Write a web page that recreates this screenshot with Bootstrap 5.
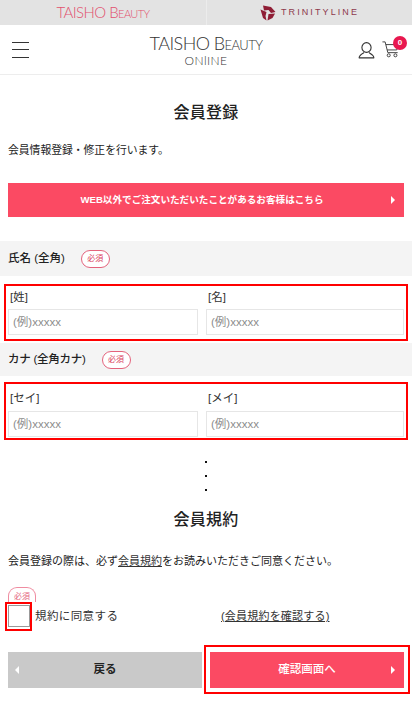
<!DOCTYPE html>
<html lang="ja">
<head>
    <meta charset="UTF-8">
    <meta name="viewport" content="width=device-width, initial-scale=1.0">
    <title>会員登録</title>
    <link href="https://cdn.jsdelivr.net/npm/bootstrap@5.3.0/dist/css/bootstrap.min.css" rel="stylesheet">
    <style>
        body { font-family: "Liberation Sans", "Noto Sans CJK JP", sans-serif; color: #222; font-size: 11px; background: #fff; }
        .brand-bar { height: 25px; background: #e3e3e3; }
        .brand-cell { flex: 1 1 50%; height: 25px; }
        .brand-cell + .brand-cell { border-left: 1px solid #ececec; }
        .brand-logo { font-family: Lato, "Liberation Sans", sans-serif; font-weight: 300; font-variant: small-caps; color: #e2506e; font-size: 15px; line-height: 25px; letter-spacing: -.56px; }
        .trinity-text { font-family: "Liberation Sans", sans-serif; color: #8e3a4c; font-size: 9px; letter-spacing: 2.1px; line-height: 25px; }
        .trinity-mark { margin-right: 5px; }
        .site-head { height: 50px; border-bottom: 1px solid #ededed; position: relative; }
        .burger { width: 17px; height: 16px; margin: 17px 0 0 12px; border-top: 1px solid #333; border-bottom: 1px solid #333; position: relative; }
        .burger::after { content: ""; position: absolute; left: 0; right: 0; top: 6px; border-top: 1px solid #333; }
        .site-logo { font-family: Lato, "Liberation Sans", sans-serif; font-weight: 300; color: #333; text-align: center; line-height: 1; }
        .site-logo-main { font-size: 18px; font-variant: small-caps; letter-spacing: -.55px; display: block; margin-top: 9px; }
        .site-logo-sub { font-size: 12px; letter-spacing: .5px; display: block; margin-top: 3px; }
        .head-icons { position: absolute; top: 17px; left: 357px; }
        .cart-icon { margin: -1px 0 0 6px; }
        .cart-count { position: absolute; left: 36px; top: -6px; width: 14px; height: 14px; border-radius: 50%; background: #e8184f; color: #fff; font-size: 8px; font-weight: 700; line-height: 14px; text-align: center; }
        .page-main { padding-top: 26px; }
        .page-title { font-size: 16px; font-weight: 500; letter-spacing: .2px; line-height: 24px; text-align: center; margin: 0; color: #222; }
        .lead-note { margin: 16px 8px 0; font-size: 10.8px; line-height: 18px; }
        .pink-btn { background: #fb4a63; color: #fff; border: 0; border-radius: 0; font-weight: 500; position: relative; }
        .pink-btn:hover { background: #fb4a63; color: #fff; }
        .notice-btn { display: block; width: 396px; height: 34px; margin: 24px 8px 0; padding: 0 8px 0 0; font-size: 9.6px; font-weight: 700; line-height: 34px; }
        .tri-right { position: absolute; right: 9px; top: 50%; margin-top: -4px; border-left: 4px solid #fff; border-top: 4px solid transparent; border-bottom: 4px solid transparent; }
        .tri-left { position: absolute; left: 7px; top: 50%; margin-top: -4px; border-right: 4px solid #fff; border-top: 4px solid transparent; border-bottom: 4px solid transparent; }
        .field-band { background: #f4f4f4; padding: 0 8px; }
        .band-one { height: 35px; margin-top: 24px; }
        .band-two { height: 33px; margin-top: 2px; }
        .field-label { font-size: 11.5px; font-weight: 500; color: #222; }
        .kana-label { letter-spacing: -.25px; }
        .must-tag { display: inline-block; width: 29px; height: 18px; margin-left: 16px; border: 1px solid #e4637c; border-radius: 9px; color: #d9405c; background: #fff; font-size: 8px; line-height: 16px; text-align: center; }
        .red-box { border: 2px solid #f00; margin: 0 4px; padding-left: 2px; }
        .box-one { height: 57px; margin-top: 8px; }
        .box-two { height: 58px; margin-top: 6px; }
        .name-col { width: 190px; flex: none; }
        .name-col + .name-col { width: 198px; }
        .name-tag { font-size: 11.5px; line-height: 14px; padding: 4px 0 0 2px; height: 23px; color: #333; }
        .box-two .name-tag { padding-top: 7px; height: 27px; }
        .name-input.form-control { height: 26px; min-height: 0; border: 1px solid #e6e6e6; border-radius: 0; padding: 0 4px; font-size: 11.5px; font-family: inherit; }
        .name-input.form-control::placeholder { color: #8c8c8c; opacity: 1; }
        .dot-col { margin-top: 21px; height: 30px; gap: 12px; }
        .dot-col span { display: block; width: 2px; height: 2px; background: #111; }
        .title-two { margin-top: 17px; }
        .rule-note { margin: 20px 8px 0; font-size: 11px; line-height: 18px; }
        .rule-note a, .rule-check a { color: #333; }
        .must-small { display: block; width: 28px; height: 15px; margin: 17px 0 0 8px; border: 1px solid #ef8ca0; border-bottom: 0; border-radius: 9px 9px 0 0; color: #e4637c; font-size: 8px; line-height: 17px; text-align: center; }
        .rule-check { height: 29px; }
        .check-frame { width: 27px; height: 29px; margin-left: 5px; border: 2px solid #f00; padding: 1px 0 0 1px; flex: none; }
        .check-frame .form-check-input { display: block; width: 22px; height: 22px; margin: 0; border: 1px solid #999; border-radius: 0; }
        .check-label { margin-left: 3px; font-size: 11.5px; color: #333; letter-spacing: .4px; width: 186px; }
        .check-link { font-size: 11px; letter-spacing: .2px; }
        .action-row { margin-top: 14px; height: 49px; }
        .back-btn { width: 194px; height: 36px; margin: 7px 0 0 8px; background: #c9c9c9; border: 0; border-radius: 0; font-weight: 700; font-size: 11.5px; color: #222; position: relative; padding: 0; flex: none; }
        .back-btn:hover { background: #c9c9c9; color: #222; }
        .go-frame { width: 206px; height: 49px; margin-left: 2px; border: 2px solid #f00; padding: 5px 4px; flex: none; }
        .go-btn { width: 194px; height: 36px; padding: 0; font-size: 11.5px; }
    </style>
</head>
<body>
    <div class="brand-bar d-flex">
        <div class="brand-cell text-center brand-logo">TAISHO Beauty</div>
        <div class="brand-cell d-flex justify-content-center align-items-center">
            <svg class="trinity-mark" width="16" height="16" viewBox="0 0 16 16">
                <path d="M3 0.5 L11 2 L15.5 7 L11 8 L8.5 5 L4 5.5 Z" fill="#8f1d35"/>
                <path d="M0.5 4.5 L6.5 7 L5.5 11 L6.5 15.5 L3 13 Z" fill="#8f1d35"/>
                <path d="M8.5 9 L15 8.5 L12.5 13 L7.5 15.5 Z" fill="#8f1d35"/>
            </svg>
            <span class="trinity-text">TRINITYLINE</span>
        </div>
    </div>

    <header class="site-head d-flex">
        <div class="burger"></div>
        <div class="site-logo position-absolute start-50 translate-middle-x text-nowrap">
            <span class="site-logo-main">TAISHO Beauty</span>
            <span class="site-logo-sub">ONlINE</span>
        </div>
        <div class="head-icons d-flex">
            <svg width="19" height="17" viewBox="0 0 19 17" fill="none" stroke="#333" stroke-width="1.1">
                <ellipse cx="9.5" cy="5.5" rx="4.6" ry="4.9"/>
                <path d="M2 15.9 C2.4 12.8 5.2 11.6 7 10.6 M17 15.9 C16.6 12.8 13.8 11.6 12 10.6 M1.8 15.9 H17.2"/>
            </svg>
            <svg class="cart-icon" width="17" height="17" viewBox="0 0 19 19" fill="none" stroke="#333" stroke-width="1">
                <path d="M0.5 1 H3.5 L6.5 13 H17.5 M4.3 4 H18 L16.5 10 H5.8"/>
                <circle cx="7.5" cy="16" r="1.7"/>
                <circle cx="15" cy="16" r="1.7"/>
            </svg>
            <div class="cart-count">0</div>
        </div>
    </header>

    <main class="page-main">
        <h1 class="page-title">会員登録</h1>
        <p class="lead-note">会員情報登録・修正を行います。</p>
        <a href="#" class="btn pink-btn notice-btn text-center">WEB以外でご注文いただいたことがあるお客様はこちら<span class="tri-right"></span></a>

        <div class="field-band band-one d-flex align-items-center">
            <span class="field-label">氏名 (全角)</span>
            <span class="must-tag">必須</span>
        </div>
        <div class="red-box box-one d-flex gap-2">
            <div class="name-col">
                <div class="name-tag">[姓]</div>
                <input type="text" class="form-control name-input" placeholder="(例)xxxxx">
            </div>
            <div class="name-col">
                <div class="name-tag">[名]</div>
                <input type="text" class="form-control name-input" placeholder="(例)xxxxx">
            </div>
        </div>

        <div class="field-band band-two d-flex align-items-center">
            <span class="field-label kana-label">カナ (全角カナ)</span>
            <span class="must-tag">必須</span>
        </div>
        <div class="red-box box-two d-flex gap-2">
            <div class="name-col">
                <div class="name-tag">[セイ]</div>
                <input type="text" class="form-control name-input" placeholder="(例)xxxxx">
            </div>
            <div class="name-col">
                <div class="name-tag">[メイ]</div>
                <input type="text" class="form-control name-input" placeholder="(例)xxxxx">
            </div>
        </div>

        <div class="dot-col d-flex flex-column align-items-center"><span></span><span></span><span></span></div>

        <h2 class="page-title title-two">会員規約</h2>
        <p class="rule-note">会員登録の際は、必ず<a href="#">会員規約</a>をお読みいただきご同意ください。</p>

        <span class="must-small">必須</span>
        <div class="rule-check d-flex align-items-center">
            <div class="check-frame"><input type="checkbox" class="form-check-input" id="agree"></div>
            <label class="check-label" for="agree">規約に同意する</label>
            <a href="#" class="check-link">(会員規約を確認する)</a>
        </div>

        <div class="action-row d-flex">
            <a href="#" class="btn back-btn d-flex align-items-center justify-content-center"><span class="tri-left"></span>戻る</a>
            <div class="go-frame">
                <a href="#" class="btn pink-btn go-btn d-flex align-items-center justify-content-center">確認画面へ<span class="tri-right"></span></a>
            </div>
        </div>
    </main>
    <script src="https://cdn.jsdelivr.net/npm/bootstrap@5.3.0/dist/js/bootstrap.bundle.min.js"></script>
</body>
</html>
